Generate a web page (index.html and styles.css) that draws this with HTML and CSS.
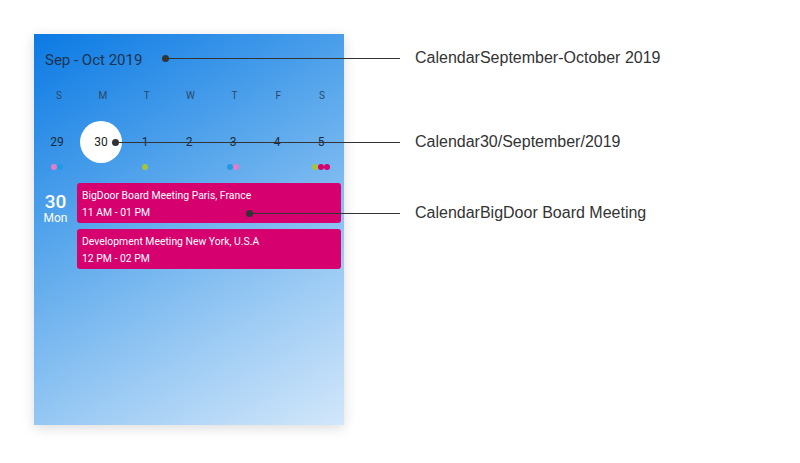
FILE: index.html
```html
<!DOCTYPE html>
<html>
<head>
    <title>Calendar</title>
    <link rel="stylesheet" href="styles.css">
</head>
<body>
    <div class="stage">
        <div class="calendar">
            <div class="cal-title">Sep - Oct 2019</div>
            <div class="week-row day-names">
                <span>S</span><span>M</span><span>T</span><span>W</span><span>T</span><span>F</span><span>S</span>
            </div>
            <div class="week-row dates">
                <div class="date"><span class="num">29</span><div class="dots"><i class="pink"></i><i class="blue"></i></div></div>
                <div class="date"><span class="num selected">30</span><div class="dots"></div></div>
                <div class="date"><span class="num">1</span><div class="dots"><i class="green"></i></div></div>
                <div class="date"><span class="num">2</span><div class="dots"></div></div>
                <div class="date"><span class="num">3</span><div class="dots"><i class="blue"></i><i class="pink"></i></div></div>
                <div class="date"><span class="num">4</span><div class="dots"></div></div>
                <div class="date"><span class="num">5</span><div class="dots"><i class="green"></i><i class="magenta"></i><i class="magenta"></i></div></div>
            </div>
            <div class="agenda">
                <div class="agenda-day">
                    <div class="agenda-num">30</div>
                    <div class="agenda-name">Mon</div>
                </div>
                <div class="events">
                    <div class="event">
                        <div class="event-title">BigDoor Board Meeting Paris, France</div>
                        <div class="event-time">11 AM - 01 PM</div>
                    </div>
                    <div class="event">
                        <div class="event-title">Development Meeting New York, U.S.A</div>
                        <div class="event-time">12 PM - 02 PM</div>
                    </div>
                </div>
            </div>
        </div>

        <!-- callouts -->
        <div class="callout c1"><span class="pin"></span><span class="wire"></span><span class="label">CalendarSeptember-October 2019</span></div>
        <div class="callout c2"><span class="pin"></span><span class="wire"></span><span class="label">Calendar30/September/2019</span></div>
        <div class="callout c3"><span class="pin"></span><span class="wire"></span><span class="label">CalendarBigDoor Board Meeting</span></div>
    </div>
</body>
</html>
```

FILE: styles.css
```css
body {
    margin: 0;
    background: #fff;
}

.stage {
    position: relative;
    width: 800px;
    height: 463px;
    padding: 34px;
    box-sizing: border-box;
}

.calendar {
    width: 310px;
    height: 391px;
    background: linear-gradient(150deg, #0b7ae4 0%, #5aa8ec 40%, #9ccbf4 72%, #d2e7fa 100%);
    box-shadow: 0 3px 12px rgba(0, 0, 0, 0.14);
    font-family: Roboto, sans-serif;
    color: #1d3550;
    display: flex;
    flex-direction: column;
}

.cal-title {
    font-size: 15px;
    padding: 14px 0 0 11px;
    height: 24px;
    line-height: 24px;
    color: #1a3352;
}

.week-row {
    display: flex;
    padding-left: 1px;
}

.week-row > * {
    width: 44px;
    text-align: center;
}

.day-names {
    margin-top: 17px;
    padding-left: 3px;
    font-size: 10px;
    line-height: 14px;
    color: #2a4866;
}

.dates {
    margin-top: 18px;
}

.date {
    display: flex;
    flex-direction: column;
    align-items: center;
}

.num {
    width: 42px;
    height: 42px;
    line-height: 42px;
    border-radius: 50%;
    font-size: 12px;
    color: #1b2b3c;
}

.num.selected {
    background: #fff;
    color: #222;
}

.dots {
    display: flex;
    justify-content: center;
    height: 6px;
    margin-top: 1px;
}

.dots i {
    width: 6px;
    height: 6px;
    border-radius: 50%;
}

.dots .pink { background: #e67bcb; }
.dots .blue { background: #1e9be2; }
.dots .green { background: #a4c43c; }
.dots .magenta { background: #d6006f; }

.agenda {
    display: flex;
    margin-top: 13px;
    padding-right: 3px;
}

.agenda-day {
    width: 43px;
    text-align: center;
    color: #fff;
    padding-top: 10px;
}

.agenda-num {
    font-size: 19px;
    font-weight: 500;
    line-height: 18px;
}

.agenda-name {
    font-size: 12px;
    line-height: 14px;
}

.events {
    flex: 1;
    display: flex;
    flex-direction: column;
    gap: 6px;
}

.event {
    background: #d6006f;
    border-radius: 3px;
    color: #fff;
    height: 40px;
    padding: 6px 0 0 5px;
    box-sizing: border-box;
}

.event-title {
    font-size: 10.4px;
    line-height: 14px;
}

.event-time {
    font-size: 10.4px;
    line-height: 20px;
}

.callout {
    position: absolute;
    left: 0;
    display: flex;
    align-items: center;
    height: 20px;
}

.pin {
    position: absolute;
    width: 7px;
    height: 7px;
    border-radius: 50%;
    background: #333;
}

.wire {
    position: absolute;
    height: 1px;
    background: #333;
}

.label {
    position: absolute;
    left: 415px;
    white-space: nowrap;
    font-family: "Liberation Sans", Arial, sans-serif;
    font-size: 16px;
    color: #333;
}

.c1 { top: 48px; }
.c1 .pin { left: 162px; }
.c1 .wire { left: 165px; width: 235px; }

.c2 { top: 132px; }
.c2 .pin { left: 112px; }
.c2 .wire { left: 115px; width: 285px; }

.c3 { top: 203px; }
.c3 .pin { left: 246px; }
.c3 .wire { left: 249px; width: 151px; }
```
